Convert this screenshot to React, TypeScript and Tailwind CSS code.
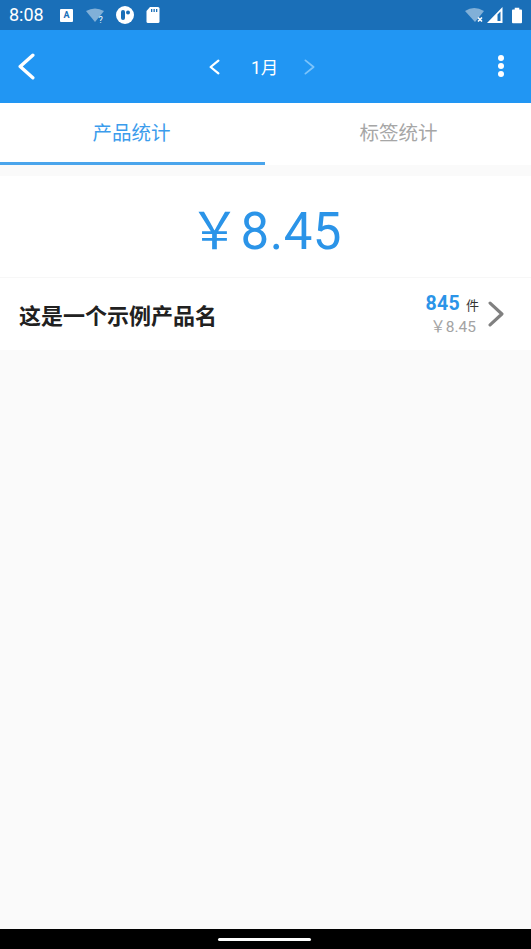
const fontStack = "font-['Roboto','Noto_Sans_CJK_SC',sans-serif]"

function Chevron({ dir, width, height, stroke, color }: { dir: 'left' | 'right'; width: number; height: number; stroke: number; color: string }) {
  const pad = stroke / 2 + 0.5
  const points =
    dir === 'left'
      ? `${width - pad},${pad} ${pad},${height / 2} ${width - pad},${height - pad}`
      : `${pad},${pad} ${width - pad},${height / 2} ${pad},${height - pad}`
  return (
    <svg width={width} height={height} viewBox={`0 0 ${width} ${height}`} className="shrink-0">
      <polyline points={points} fill="none" stroke={color} strokeWidth={stroke} strokeLinecap="round" strokeLinejoin="round" />
    </svg>
  )
}

function StatusBar() {
  return (
    <div className="h-[30px] bg-[#1a6fb8] flex items-center px-[9px] text-white">
      <span className="text-[18px] leading-none w-[44px]">8:08</span>
      <div className="flex items-center ml-[7px] gap-[13px]">
        {/* keyboard A */}
        <div className="w-[13px] h-[13px] bg-white rounded-[1px] flex items-center justify-center">
          <span className="text-[9px] font-bold leading-none text-[#1a6fb8]">A</span>
        </div>
        {/* wifi ? */}
        <svg width="19" height="15" viewBox="0 0 19 15">
          <path d="M0 3 Q9-2 18 3 L9 14 Z" fill="#fff" fillOpacity="0.45" />
          <text x="12.5" y="14.5" fontSize="9" fill="#fff">?</text>
        </svg>
        {/* circle logo */}
        <svg width="18" height="18" viewBox="0 0 18 18" className="-ml-[2px]">
          <circle cx="9" cy="9" r="9" fill="#fff" />
          <rect x="5" y="4" width="4" height="10" rx="2" fill="#1a6fb8" />
          <circle cx="12" cy="6.5" r="2" fill="#1a6fb8" />
        </svg>
        {/* sd card */}
        <svg width="14" height="16" viewBox="0 0 14 16" className="-ml-[1px]">
          <path d="M4 0 H12 a1.5 1.5 0 0 1 1.5 1.5 V14.5 a1.5 1.5 0 0 1-1.5 1.5 H2 a1.5 1.5 0 0 1-1.5-1.5 V4 Z" fill="#fff" />
          <rect x="5" y="2" width="1.3" height="3" fill="#1a6fb8" />
          <rect x="7.5" y="2" width="1.3" height="3" fill="#1a6fb8" />
          <rect x="10" y="2" width="1.3" height="3" fill="#1a6fb8" />
        </svg>
      </div>
      <div className="ml-auto flex items-center gap-[9px]">
        <div className="flex items-center gap-[2px]">
          {/* wifi x */}
          <svg width="20" height="16" viewBox="0 0 20 16">
            <path d="M0 4 Q9-2 19 4 L10 15 Z" fill="#fff" fillOpacity="0.45" />
            <path d="M13 10.5 L17 14.5 M17 10.5 L13 14.5" stroke="#fff" strokeWidth="1.6" />
          </svg>
          {/* signal */}
          <svg width="16" height="17" viewBox="0 0 16 17">
            <path d="M0 16 L15.5 0 V16 Z M10.5 7.5 V14 H13.5 V4.5 Z" fill="#fff" fillRule="evenodd" />
          </svg>
        </div>
        {/* battery */}
        <svg width="10" height="17" viewBox="0 0 11 17">
          <path d="M3 0 H8 V2 H10 a1 1 0 0 1 1 1 V16 a1 1 0 0 1-1 1 H1 a1 1 0 0 1-1-1 V3 a1 1 0 0 1 1-1 H3 Z" fill="#fff" />
        </svg>
      </div>
    </div>
  )
}

function Header() {
  return (
    <div className="h-[73px] bg-[#2196f3] flex items-center text-white">
      <button className="ml-[18px]">
        <Chevron dir="left" width={17} height={27} stroke={3.4} color="#fff" />
      </button>
      <div className="ml-[174px] flex items-center">
        <Chevron dir="left" width={11} height={16} stroke={2.2} color="#fff" />
        <span className="ml-[31px] text-[17.5px] leading-[20px] w-[28px] pt-[3px]">1月</span>
        <span className="ml-[25px]">
          <Chevron dir="right" width={11} height={16} stroke={1.8} color="#7cc4fb" />
        </span>
      </div>
      <div className="ml-auto mr-[27px] flex flex-col gap-[2px] -mt-[2px]">
        <span className="w-[6px] h-[6px] rounded-full bg-white" />
        <span className="w-[6px] h-[6px] rounded-full bg-white" />
        <span className="w-[6px] h-[6px] rounded-full bg-white" />
      </div>
    </div>
  )
}

function Tabs() {
  return (
    <div className="h-[62px] bg-white flex">
      <div className="w-[265px] border-b-[3px] border-[#4aa5ec] flex items-center justify-center text-[#3b9cec] text-[19.5px] pt-[3px] pr-[2px]">
        产品统计
      </div>
      <div className="flex-1 flex items-center justify-center text-[#a6a6a6] text-[19.5px] pl-[1px]">
        标签统计
      </div>
    </div>
  )
}

export default function App() {
  return (
    <div className={`w-[531px] h-[949px] flex flex-col bg-[#fafafa] ${fontStack}`}>
      <StatusBar />
      <Header />
      <Tabs />
      <div className="h-[11px]" />
      <div className="h-[102px] bg-white flex items-center justify-center text-[#2b94e8] text-[51px] leading-none tracking-[0.5px] border-b border-[#f7f7f7] pt-[10px]">
        ￥8.45
      </div>
      <div className="h-[72px] bg-white flex items-center pl-[19px] pr-[27px]">
        <span className="text-[22px] font-bold text-[#212121] pt-[4px]">这是一个示例产品名</span>
        <div className="ml-auto flex flex-col items-end mr-[12px] pt-[1px]">
          <div className="flex items-baseline leading-none mr-[-3px]">
            <span className="text-[19.5px] font-bold text-[#2b94e8] tracking-[0.3px]">845</span>
            <span className="ml-[6px] text-[13px] text-[#333]">件</span>
          </div>
          <span className="mt-[7px] text-[15.5px] leading-none text-[#a3a3a3]">￥8.45</span>
        </div>
        <Chevron dir="right" width={16} height={26} stroke={3.2} color="#808080" />
      </div>
      <div className="flex-1" />
      <div className="h-[20px] bg-black flex items-center justify-center">
        <span className="w-[93px] h-[3px] bg-white rounded-full -ml-[2px]" />
      </div>
    </div>
  )
}
